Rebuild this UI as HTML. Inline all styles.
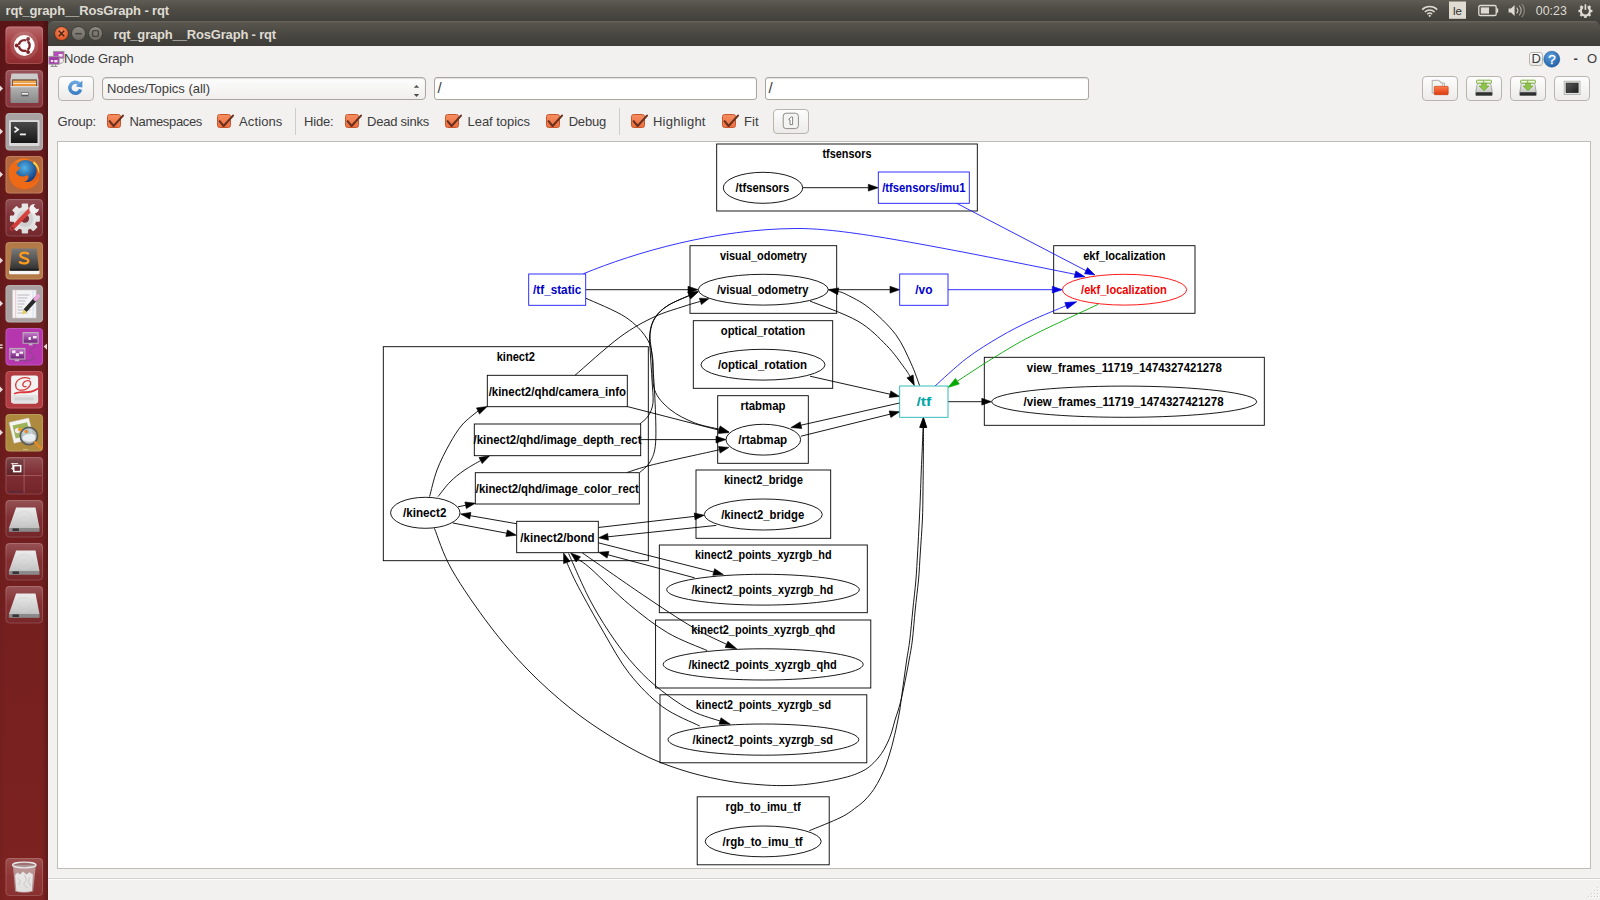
<!DOCTYPE html>
<html>
<head>
<meta charset="utf-8">
<title>rqt_graph__RosGraph - rqt</title>
<style>
html,body{margin:0;padding:0;}
body{width:1600px;height:900px;overflow:hidden;position:relative;background:#f2f1f0;font-family:"Liberation Sans",sans-serif;color:#3c3c3c;}
.abs{position:absolute;}
#panel{left:0;top:0;width:1600px;height:22px;background:linear-gradient(#5e5c54 0,#504e47 35%,#403f3a 100%);}
#panel .ttl{left:5.5px;top:3px;font-size:13px;font-weight:bold;color:#dfdbd2;white-space:nowrap;}
#launcher{left:0;top:21px;width:48px;height:879px;background:linear-gradient(#5c1517 0,#66191b 12%,#701d1e 50%,#7d2321 100%);}
#titlebar{left:48px;top:21px;width:1552px;height:25px;background:linear-gradient(#6a685f 0,#57554d 2px,#4a4842 50%,#3d3c38 100%);border-radius:6px 6px 0 0;}
#titlebar .ttl{left:65.5px;top:6px;font-size:13px;font-weight:bold;color:#dfdbd2;white-space:nowrap;}
.tile{position:absolute;left:6px;width:37px;height:37px;border-radius:4px;box-shadow:inset 0 0 0 1px rgba(255,255,255,0.22);overflow:hidden;}
.tile svg{position:absolute;left:0;top:0;}
.lbl{position:absolute;font-size:13px;color:#3c3c3c;white-space:nowrap;}
.cb{position:absolute;width:14px;height:13.5px;box-sizing:border-box;border:1px solid #c6562b;border-radius:2.5px;background:linear-gradient(#f58d5f,#ee6f40);}
.cb svg{position:absolute;left:-1px;top:-1.3px;overflow:visible;}
.btn{position:absolute;border:1px solid #b9b5ae;border-radius:4px;background:linear-gradient(#fdfdfd,#ecebe9);box-sizing:border-box;}
.inp{position:absolute;border:1px solid #aaa59d;border-radius:3px;background:#fff;box-sizing:border-box;box-shadow:inset 0 1px 1px rgba(0,0,0,0.12);}
</style>
</head>
<body>
<!-- main window content background -->
<div class="abs" style="left:48px;top:46px;width:1552px;height:854px;background:#f2f1f0;"></div>

<!-- dark backing behind titlebar corners -->
<div class="abs" style="left:48px;top:20px;width:1552px;height:10px;background:#3f3e39;"></div>
<!-- top panel -->
<div id="panel" class="abs">
  <div class="lbl ttl" style="letter-spacing:-0.134px;">rqt_graph__RosGraph - rqt</div>
</div>

<!-- indicators -->
<svg class="abs" style="left:1416px;top:0;" width="184" height="22" viewBox="0 0 184 22">
  <!-- wifi -->
  <g fill="none" stroke="#dfdbd2" stroke-linecap="butt">
    <path d="M6.2 9.6 A10.6 10.6 0 0 1 21.2 9.6" stroke-width="1.5"/>
    <path d="M8.8 12 A7 7 0 0 1 18.6 12" stroke-width="1.5"/>
    <path d="M11.2 14.2 A3.6 3.6 0 0 1 16.2 14.2" stroke-width="1.4"/>
  </g>
  <circle cx="13.7" cy="15.8" r="1.1" fill="#dfdbd2"/>
  <!-- le -->
  <rect x="33" y="1.5" width="17" height="17.3" fill="#dfdbd2"/>
  <text x="41.4" y="14.6" font-family="Liberation Sans, sans-serif" font-size="11.5" fill="#2c2b28" text-anchor="middle">le</text>
  <!-- battery -->
  <rect x="62.8" y="5.5" width="17.4" height="10" rx="1.6" fill="none" stroke="#dfdbd2" stroke-width="1.3"/>
  <rect x="80.6" y="8.4" width="1.6" height="4.2" fill="#dfdbd2"/>
  <rect x="64.8" y="7.4" width="8.2" height="6.2" fill="#dfdbd2"/>
  <!-- volume -->
  <path d="M92.6 8.6 H95 L98.6 5 V16 L95 12.4 H92.6 Z" fill="#dfdbd2"/>
  <path d="M100.6 7.6 A4.4 4.4 0 0 1 100.6 13.4" fill="none" stroke="#c9c5bc" stroke-width="1.2"/>
  <path d="M103.2 5.6 A7.2 7.2 0 0 1 103.2 15.4" fill="none" stroke="#aaa79f" stroke-width="1.2"/>
  <path d="M105.8 3.8 A10 10 0 0 1 105.8 17.2" fill="none" stroke="#8a877f" stroke-width="1.2"/>
  <!-- time -->
  <text x="119.8" y="15.2" font-family="Liberation Sans, sans-serif" font-size="13" fill="#dfdbd2" textLength="31" lengthAdjust="spacingAndGlyphs">00:23</text>
  <!-- gear/power -->
  <g transform="translate(169.4,11)">
    <circle r="4.6" fill="none" stroke="#dfdbd2" stroke-width="2.2"/>
    <g stroke="#dfdbd2" stroke-width="2.4">
      <path d="M0 -7 V-4.6" transform="rotate(45)"/><path d="M0 -7 V-4.6" transform="rotate(90)"/><path d="M0 -7 V-4.6" transform="rotate(135)"/>
      <path d="M0 -7 V-4.6" transform="rotate(180)"/><path d="M0 -7 V-4.6" transform="rotate(225)"/><path d="M0 -7 V-4.6" transform="rotate(270)"/><path d="M0 -7 V-4.6" transform="rotate(315)"/>
    </g>
    <rect x="-2.2" y="-7.4" width="4.4" height="5" fill="#4c4a43"/>
    <path d="M0 -6.8 V-1.2" stroke="#dfdbd2" stroke-width="1.7"/>
  </g>
</svg>

<!-- window title bar -->
<div id="titlebar" class="abs">
  <div class="lbl ttl" style="letter-spacing:-0.174px;">rqt_graph__RosGraph - rqt</div>
</div>


<!-- window buttons -->
<svg class="abs" style="left:48px;top:21px;" width="70" height="25" viewBox="0 0 70 25">
  <defs>
    <radialGradient id="gclose" cx="50%" cy="35%" r="70%"><stop offset="0" stop-color="#f58a5c"/><stop offset="1" stop-color="#dc4d1c"/></radialGradient>
    <linearGradient id="ggrey" x1="0" y1="0" x2="0" y2="1"><stop offset="0" stop-color="#8c8a81"/><stop offset="1" stop-color="#6b6961"/></linearGradient>
  </defs>
  <circle cx="13.5" cy="12.5" r="7" fill="url(#gclose)" stroke="#3a2d26" stroke-width="0.8"/>
  <path d="M10.8 9.8 L16.2 15.2 M16.2 9.8 L10.8 15.2" stroke="#4a2313" stroke-width="1.4" fill="none"/>
  <circle cx="30.5" cy="12.5" r="7" fill="url(#ggrey)" stroke="#33322e" stroke-width="0.8"/>
  <path d="M27.3 12.7 H33.7" stroke="#46443f" stroke-width="1.5"/>
  <circle cx="47.5" cy="12.5" r="7" fill="url(#ggrey)" stroke="#33322e" stroke-width="0.8"/>
  <rect x="44.6" y="9.6" width="5.8" height="5.8" rx="1" fill="none" stroke="#46443f" stroke-width="1.4"/>
</svg>

<!-- dock title row -->
<svg class="abs" style="left:48px;top:50px;" width="17" height="18" viewBox="0 0 17 18">
  <rect x="5.4" y="1.4" width="10.6" height="6.8" fill="#b44bb8" stroke="#9a9a9a" stroke-width="0.9"/>
  <rect x="10.6" y="4" width="4" height="2.6" fill="#f1e4f2"/>
  <path d="M14.6 8.4 C16.4 10.4 15.6 13.6 11.6 13.4" fill="none" stroke="#a0a0a0" stroke-width="1"/>
  <rect x="0.8" y="6.4" width="10.4" height="7.8" fill="#a23aa8" stroke="#9a9a9a" stroke-width="0.9"/>
  <rect x="2.8" y="10" width="2.4" height="2" fill="#f1e4f2"/><rect x="6.2" y="10" width="3.4" height="2.4" fill="#f1e4f2"/>
  <path d="M4.4 14.4 V16 M7.6 14.4 V16 M2.6 16.4 H9.4" stroke="#8a8a8a" stroke-width="1"/>
</svg>
<div class="lbl" style="left:64px;top:51px;letter-spacing:-0.133px;">Node Graph</div>

<!-- toolbar row -->
<div class="btn" style="left:58px;top:76px;width:36px;height:25px;"></div>
<svg class="abs" style="left:66px;top:78px;" width="20" height="20" viewBox="0 0 20 20">
  <defs><linearGradient id="gref" x1="0" y1="0" x2="0" y2="1"><stop offset="0" stop-color="#6aa6e0"/><stop offset="1" stop-color="#3f7fc6"/></linearGradient></defs>
  <path d="M13 5.6 A5.5 5.5 0 1 0 14.6 11.4" fill="none" stroke="url(#gref)" stroke-width="3.5"/>
  <path d="M16.4 2.4 L16.4 9.4 L9.8 8.4 Z" fill="#5595d6"/>
</svg>
<div class="inp" style="left:102px;top:77px;width:324px;height:23px;background:linear-gradient(#fdfdfd,#f0efed);border-radius:4px;"></div>
<svg class="abs" style="left:412px;top:83px;" width="10" height="16" viewBox="0 0 10 16"><path d="M1.8 4.8 L4.5 2 L7.2 4.8 Z M1.8 11 L7.2 11 L4.5 14 Z" fill="#4d4d4d"/></svg>
<div class="lbl" style="left:107px;top:81px;letter-spacing:-0.018px;">Nodes/Topics (all)</div>
<div class="inp" style="left:434px;top:77px;width:323px;height:23px;"></div>
<div class="lbl" style="left:437.5px;top:79px;font-size:15px;">/</div>
<div class="inp" style="left:765px;top:77px;width:324px;height:23px;"></div>
<div class="lbl" style="left:768.5px;top:79px;font-size:15px;">/</div>
<div class="btn" style="left:1422px;top:76px;width:36px;height:25px;"></div>
<div class="btn" style="left:1466px;top:76px;width:36px;height:25px;"></div>
<div class="btn" style="left:1510px;top:76px;width:36px;height:25px;"></div>
<div class="btn" style="left:1554px;top:76px;width:36px;height:25px;"></div>


<!-- toolbar icons right -->
<svg class="abs" style="left:1430px;top:78px;" width="20" height="19" viewBox="0 0 20 19">
  <defs><linearGradient id="gfold" x1="0" y1="0" x2="0" y2="1"><stop offset="0" stop-color="#fb7d4c"/><stop offset="1" stop-color="#dd3a0e"/></linearGradient></defs>
  <path d="M2.2 2.4 H8.4 L11.2 5 H14.4 V15 H2.2 Z" fill="#f4f4f2" stroke="#a9a7a2" stroke-width="0.9"/>
  <path d="M6 2.4 H9.6 L12.4 5.2 V8" fill="none" stroke="#bcbab5" stroke-width="0.8"/>
  <rect x="4.2" y="8.3" width="14" height="8.4" rx="0.8" fill="url(#gfold)" stroke="#c5370f" stroke-width="0.6"/>
</svg>
<svg id="drv1" class="abs" style="left:1474px;top:78px;" width="20" height="20" viewBox="0 0 20 20">
  <defs><linearGradient id="gdrv" x1="0" y1="0" x2="0" y2="1"><stop offset="0" stop-color="#f2f2f0"/><stop offset="1" stop-color="#b9b9b6"/></linearGradient></defs>
  <path d="M3.4 5 H16.6 L18.2 14 V17.4 H1.8 V14 Z" fill="url(#gdrv)" stroke="#8b8b88" stroke-width="0.7"/>
  <rect x="1.8" y="14.2" width="16.4" height="3.4" rx="0.8" fill="#2f2f2f"/>
  <rect x="2.6" y="2.2" width="14.8" height="3" rx="0.8" fill="#eef5e2" stroke="#7cb13c" stroke-width="1"/>
  <path d="M9.6 2.4 V5" stroke="#7cb13c" stroke-width="0.8"/>
  <path d="M7.6 5.2 H12.4 V8 H15 L10 12.8 L5 8 H7.6 Z" fill="#8dc348" stroke="#6da030" stroke-width="0.6"/>
</svg>
<svg id="drv2" class="abs" style="left:1518px;top:78px;" width="20" height="20" viewBox="0 0 20 20">
  <path d="M3.4 5 H16.6 L18.2 14 V17.4 H1.8 V14 Z" fill="url(#gdrv)" stroke="#8b8b88" stroke-width="0.7"/>
  <rect x="1.8" y="14.2" width="16.4" height="3.4" rx="0.8" fill="#2f2f2f"/>
  <rect x="2.6" y="2.2" width="14.8" height="3" rx="0.8" fill="#eef5e2" stroke="#7cb13c" stroke-width="1"/>
  <path d="M9.6 2.4 V5" stroke="#7cb13c" stroke-width="0.8"/>
  <path d="M7.6 5.2 H12.4 V8 H15 L10 12.8 L5 8 H7.6 Z" fill="#8dc348" stroke="#6da030" stroke-width="0.6"/>
</svg>
<svg class="abs" style="left:1562px;top:79px;" width="20" height="18" viewBox="0 0 20 18">
  <defs><linearGradient id="gblk" x1="0" y1="0" x2="1" y2="1"><stop offset="0" stop-color="#5a5a5a"/><stop offset="1" stop-color="#1e1e1e"/></linearGradient></defs>
  <rect x="2.2" y="2.2" width="15.8" height="13.4" fill="#f6f6f5" stroke="#a5a5a2" stroke-width="0.8"/>
  <rect x="4" y="4" width="12.2" height="9.8" fill="url(#gblk)" stroke="#222" stroke-width="0.6"/>
</svg>

<!-- D / ? / - O -->
<div class="abs" style="left:1529px;top:52px;width:14px;height:13.5px;box-sizing:border-box;border:1px solid #b9b5ae;border-radius:3px;background:linear-gradient(#fdfdfd,#e9e8e6);"></div>
<div class="lbl" style="left:1531.5px;top:51px;font-size:13px;">D</div>
<svg class="abs" style="left:1543px;top:50px;" width="18" height="18" viewBox="0 0 18 18">
  <defs><radialGradient id="ghelp" cx="40%" cy="30%" r="75%"><stop offset="0" stop-color="#5a9bdc"/><stop offset="1" stop-color="#1f5fa6"/></radialGradient></defs>
  <circle cx="8.8" cy="9.2" r="8" fill="url(#ghelp)" stroke="#1c568f" stroke-width="0.5"/>
  <text x="8.9" y="13.8" font-family="Liberation Sans, sans-serif" font-size="13.5" fill="#fff" stroke="#fff" stroke-width="0.35" text-anchor="middle">?</text>
</svg>
<div class="lbl" style="left:1573.5px;top:50.5px;font-weight:bold;">-</div>
<div class="lbl" style="left:1587px;top:51px;">O</div>

<!-- options row -->
<div class="lbl" style="left:57.5px;top:114px;letter-spacing:-0.208px;">Group:</div>
<div class="cb" style="left:107px;top:114px;"><svg width="18" height="16" viewBox="0 0 18 16"><path d="M2.6 7.2 L6.6 12 L16 1.6" fill="none" stroke="#6a3120" stroke-width="2.1" stroke-linecap="round" stroke-linejoin="round"/></svg></div><div class="lbl" style="left:129.5px;top:114px;letter-spacing:-0.338px;">Namespaces</div>
<div class="cb" style="left:217px;top:114px;"><svg width="18" height="16" viewBox="0 0 18 16"><path d="M2.6 7.2 L6.6 12 L16 1.6" fill="none" stroke="#6a3120" stroke-width="2.1" stroke-linecap="round" stroke-linejoin="round"/></svg></div><div class="lbl" style="left:239px;top:114px;letter-spacing:0.123px;">Actions</div>
<div class="abs" style="left:295px;top:108px;width:1px;height:27px;background:#d0cdc8;"></div>
<div class="lbl" style="left:304px;top:114px;letter-spacing:-0.172px;">Hide:</div>
<div class="cb" style="left:345px;top:114px;"><svg width="18" height="16" viewBox="0 0 18 16"><path d="M2.6 7.2 L6.6 12 L16 1.6" fill="none" stroke="#6a3120" stroke-width="2.1" stroke-linecap="round" stroke-linejoin="round"/></svg></div><div class="lbl" style="left:367px;top:114px;letter-spacing:-0.231px;">Dead sinks</div>
<div class="cb" style="left:445px;top:114px;"><svg width="18" height="16" viewBox="0 0 18 16"><path d="M2.6 7.2 L6.6 12 L16 1.6" fill="none" stroke="#6a3120" stroke-width="2.1" stroke-linecap="round" stroke-linejoin="round"/></svg></div><div class="lbl" style="left:467.5px;top:114px;letter-spacing:-0.034px;">Leaf topics</div>
<div class="cb" style="left:546px;top:114px;"><svg width="18" height="16" viewBox="0 0 18 16"><path d="M2.6 7.2 L6.6 12 L16 1.6" fill="none" stroke="#6a3120" stroke-width="2.1" stroke-linecap="round" stroke-linejoin="round"/></svg></div><div class="lbl" style="left:568.7px;top:114px;letter-spacing:-0.203px;">Debug</div>
<div class="abs" style="left:619px;top:108px;width:1px;height:27px;background:#d0cdc8;"></div>
<div class="cb" style="left:631px;top:114px;"><svg width="18" height="16" viewBox="0 0 18 16"><path d="M2.6 7.2 L6.6 12 L16 1.6" fill="none" stroke="#6a3120" stroke-width="2.1" stroke-linecap="round" stroke-linejoin="round"/></svg></div><div class="lbl" style="left:653px;top:114px;letter-spacing:0.234px;">Highlight</div>
<div class="cb" style="left:722px;top:114px;"><svg width="18" height="16" viewBox="0 0 18 16"><path d="M2.6 7.2 L6.6 12 L16 1.6" fill="none" stroke="#6a3120" stroke-width="2.1" stroke-linecap="round" stroke-linejoin="round"/></svg></div><div class="lbl" style="left:744px;top:114px;letter-spacing:0.082px;">Fit</div>
<div class="btn" style="left:773px;top:109px;width:36px;height:25px;"></div>
<svg class="abs" style="left:782px;top:112px;" width="18" height="18" viewBox="0 0 18 18">
  <rect x="1.2" y="1.2" width="15.2" height="15.4" rx="3" fill="#f4f4f3" stroke="#8f8d88" stroke-width="1"/>
  <path d="M7 6.8 L9.4 5 H10.6 V12.6 H8 V8 H7 Z" fill="#fff" stroke="#77756f" stroke-width="0.9"/>
</svg>

<!-- launcher -->
<div id="launcher" class="abs">
  <div class="abs" style="left:0;top:0;width:48px;height:879px;background:linear-gradient(90deg,rgba(0,0,0,0.05) 0,rgba(0,0,0,0) 12%,rgba(0,0,0,0) 88%,rgba(0,0,0,0.12) 94%,rgba(0,0,0,0.24) 100%);"></div>
</div>
<svg class="abs" style="left:0;top:21px;" width="48" height="879" viewBox="0 21 48 879">
  <defs>
    <linearGradient id="tg" x1="0" y1="0" x2="0" y2="1"><stop offset="0" stop-color="#fff" stop-opacity="0.28"/><stop offset="0.5" stop-color="#fff" stop-opacity="0.04"/><stop offset="1" stop-color="#000" stop-opacity="0.1"/></linearGradient>
    <linearGradient id="gcab" x1="0" y1="0" x2="0" y2="1"><stop offset="0" stop-color="#c2c2c2"/><stop offset="1" stop-color="#8a8a8a"/></linearGradient>
    <linearGradient id="gterm" x1="0" y1="0" x2="0" y2="1"><stop offset="0" stop-color="#4a4a4a"/><stop offset="1" stop-color="#161616"/></linearGradient>
    <radialGradient id="gff" cx="45%" cy="40%" r="60%"><stop offset="0" stop-color="#ffb63a"/><stop offset="0.6" stop-color="#f57a1c"/><stop offset="1" stop-color="#d9480f"/></radialGradient>
    <radialGradient id="gglobe" cx="45%" cy="35%" r="65%"><stop offset="0" stop-color="#4fb4e8"/><stop offset="1" stop-color="#14397c"/></radialGradient>
    <linearGradient id="gsub" x1="0" y1="0" x2="0" y2="1"><stop offset="0" stop-color="#7a7a7a"/><stop offset="1" stop-color="#2e2e2e"/></linearGradient>
    <linearGradient id="ghd" x1="0" y1="0" x2="0" y2="1"><stop offset="0" stop-color="#e9e9e9"/><stop offset="1" stop-color="#c4c4c4"/></linearGradient>
    <linearGradient id="gmon" x1="0" y1="0" x2="0" y2="1"><stop offset="0" stop-color="#c77acb"/><stop offset="1" stop-color="#6d1d78"/></linearGradient>
    <g id="hdd">
      <path d="M10.6 3.6 H30 L34 24 H3.4 Z" fill="url(#ghd)"/>
      <ellipse cx="18.6" cy="14.6" rx="8.6" ry="7" fill="none" stroke="#d2d2d2" stroke-width="0.9"/>
      <ellipse cx="19" cy="14" rx="3" ry="2" fill="none" stroke="#d8d8d8" stroke-width="0.9"/>
      <rect x="3.4" y="24" width="30.6" height="3.8" fill="#8c8c8c"/>
      <rect x="7" y="24.4" width="6.4" height="2.6" fill="#333"/>
    </g>
  </defs>
  <!-- tile backgrounds -->
  <g id="tiles">
    <rect x="5.5" y="26.5" width="37.5" height="37.5" rx="4" fill="#9d2f33"/>
    <rect x="5.5" y="70" width="37.5" height="37.5" rx="4" fill="#8b3840"/>
    <rect x="5.5" y="113" width="37.5" height="37.5" rx="4" fill="#a9a2a2"/>
    <rect x="5.5" y="156" width="37.5" height="37.5" rx="4" fill="#b2673f"/>
    <rect x="5.5" y="199" width="37.5" height="37.5" rx="4" fill="#7a2a30"/>
    <rect x="5.5" y="242" width="37.5" height="37.5" rx="4" fill="#b37a48"/>
    <rect x="5.5" y="285" width="37.5" height="37.5" rx="4" fill="#aaa2a0"/>
    <rect x="5.5" y="328" width="37.5" height="37.5" rx="4" fill="#b536ad"/>
    <rect x="5.5" y="371" width="37.5" height="37.5" rx="4" fill="#b13c42"/>
    <rect x="5.5" y="414" width="37.5" height="37.5" rx="4" fill="#ad8a3e"/>
    <rect x="5.5" y="457" width="37.5" height="37.5" rx="4" fill="#78252a"/>
    <rect x="5.5" y="500" width="37.5" height="37.5" rx="4" fill="#7b272b"/>
    <rect x="5.5" y="543" width="37.5" height="37.5" rx="4" fill="#7d282b"/>
    <rect x="5.5" y="586" width="37.5" height="37.5" rx="4" fill="#7f292b"/>
    <rect x="5.5" y="858" width="37.5" height="38" rx="4" fill="#8c3231"/>
  </g>
  <!-- 1 ubuntu -->
  <g transform="translate(5.5,26.5)">
    <circle cx="18.8" cy="19" r="14" fill="#fff" fill-opacity="0.12"/>
    <circle cx="18.8" cy="19" r="10.4" fill="#fff"/>
    <circle cx="18.8" cy="19" r="5.4" fill="none" stroke="#7a1a1e" stroke-width="2.3"/>
    <g fill="#7a1a1e"><circle cx="11.2" cy="19" r="1.9"/><circle cx="22.6" cy="12.4" r="1.9"/><circle cx="22.6" cy="25.6" r="1.9"/></g>
    <g stroke="#fff" stroke-width="1.3"><path d="M13 19 H15"/><path d="M21.6 14.2 L20.6 15.9"/><path d="M21.6 23.8 L20.6 22.1"/></g>
  </g>
  <!-- 2 files -->
  <g transform="translate(5.5,70)">
    <path d="M6 3.5 H32 L33 10 H5 Z" fill="#c6c6c6"/>
    <rect x="5" y="9" width="28" height="24" rx="1.2" fill="url(#gcab)"/>
    <rect x="6.6" y="9.4" width="24.8" height="6.8" fill="#5a3a22"/>
    <rect x="7.4" y="10.6" width="23.2" height="2.2" fill="#f7a340"/>
    <rect x="7.4" y="12.8" width="23.2" height="1.2" fill="#fde2b8"/>
    <rect x="7.4" y="14" width="23.2" height="2.2" fill="#ee8a2c"/>
    <rect x="5" y="16.2" width="28" height="1" fill="#e6e6e6"/>
    <rect x="15.4" y="22" width="8" height="4.8" rx="0.8" fill="#7d7d7d"/>
    <rect x="16.4" y="23" width="6" height="1.8" fill="#ededed"/>
    <rect x="16.4" y="24.8" width="6" height="1.2" fill="#555"/>
  </g>
  <!-- 3 terminal -->
  <g transform="translate(5.5,113)">
    <rect x="3.5" y="7" width="30.5" height="26" rx="1.2" fill="#d9d9d9"/>
    <rect x="5.4" y="9" width="26.6" height="21" fill="url(#gterm)"/>
    <path d="M9 14 L12.6 16.6 L9 19.2" fill="none" stroke="#f0f0f0" stroke-width="1.7"/>
    <path d="M14.4 21.4 H20.4" stroke="#f0f0f0" stroke-width="1.8"/>
  </g>
  <!-- 4 firefox -->
  <g transform="translate(5.5,156) translate(18.6,18.4) scale(1.1) translate(-19,-19.6)">
    <circle cx="19" cy="19" r="14" fill="url(#gff)"/>
    <circle cx="20.4" cy="16.6" r="10" fill="url(#gglobe)"/>
    <path d="M5.4 14 C7 9.6 10.4 7.6 13.8 8.4 C11.6 10.6 12.6 13 15.6 13.4 C14.8 15.6 12.2 16 11.8 18.4 C13.4 21.6 18.6 22.6 22 20.2 C24.6 22 22 26.4 18 26.6 C23 30 31 27 32.6 19 C34 26 29 33 19 33 C10 33 4 26 5.4 14 Z" fill="#ee6a17"/>
    <path d="M28 7.6 C32 10.6 33.6 15.4 32.6 19.6 C31.8 15 30.4 12.2 27.2 9.8 Z" fill="#ffd23e"/>
  </g>
  <!-- 5 settings -->
  <g transform="translate(5.5,199)">
    <g transform="translate(19.4,19.6)">
      <g fill="#e4e4e4">
        <rect x="-3.2" y="-15" width="6.4" height="30" rx="1"/>
        <rect x="-3.2" y="-15" width="6.4" height="30" rx="1" transform="rotate(45)"/>
        <rect x="-3.2" y="-15" width="6.4" height="30" rx="1" transform="rotate(90)"/>
        <rect x="-3.2" y="-15" width="6.4" height="30" rx="1" transform="rotate(135)"/>
      </g>
      <circle r="11.6" fill="#e4e4e4"/>
      <circle r="8.4" fill="#cfcfcf"/>
      <circle r="4.2" fill="#7a2a30"/>
    </g>
    <path d="M6.4 29.6 L24.6 10.8" stroke="#d53a35" stroke-width="4.2" stroke-linecap="round"/>
    <circle cx="6.8" cy="29.4" r="1.3" fill="#7a2a30"/>
    <path d="M24.4 12.4 C22.6 8.4 25.4 4.6 29.4 5 L27.8 8 L30.6 10.6 L33.4 9.4 C33.4 13.4 29.4 15.2 26 13.8 Z" fill="#f1f1f1"/>
  </g>
  <!-- 6 sublime -->
  <g transform="translate(5.5,242)">
    <path d="M4.4 28.4 L6.4 6.4 H31.2 L33.4 28.4 Z" fill="url(#gsub)"/>
    <path d="M3.6 28.4 H34 V31 Q34 32.2 32.8 32.2 H4.8 Q3.6 32.2 3.6 31 Z" fill="#f4f4f4"/>
    <rect x="4.6" y="26.8" width="28.6" height="2" fill="#1e1e1e"/>
    <path d="M22.6 11.6 C19 9.6 14.6 11 15 13.6 C15.4 16.6 22.6 15.6 22.8 18.8 C23 21.6 17.6 22.2 14.4 20.2" fill="none" stroke="#ff9a1c" stroke-width="2.3" stroke-linecap="round"/>
  </g>
  <!-- 7 text editor -->
  <g transform="translate(5.5,285)">
    <rect x="7" y="5" width="23.6" height="28" fill="#f4f4f6" stroke="#c9c9c9" stroke-width="0.6"/>
    <path d="M10.2 5 V33" stroke="#f0b0b0" stroke-width="0.7"/>
    <path d="M27.6 5 V33" stroke="#c8d4f0" stroke-width="0.7"/>
    <g stroke="#b9b9c0" stroke-width="1"><path d="M12 10 H24"/><path d="M12 13 H22"/><path d="M12 16 H20"/><path d="M12 19 H19"/><path d="M12 22 H17"/><path d="M12 25 H25"/><path d="M12 28 H22"/></g>
    <path d="M19.6 25.6 L30.6 13.4" stroke="#2a2a2a" stroke-width="4"/>
    <path d="M30 14 L32.4 11.2" stroke="#e9a3d8" stroke-width="4.2" stroke-linecap="round"/>
    <path d="M16.4 29.4 L18 24.6 L21.4 27.4 Z" fill="#e6cf4e"/>
  </g>
  <!-- 8 rqt (active) -->
  <g transform="translate(5.5,328)">
    <rect x="17.6" y="4.6" width="15" height="10.6" fill="url(#gmon)" stroke="#b9b9b9" stroke-width="1"/>
    <rect x="27.4" y="8" width="3.8" height="2.4" fill="#f5ecf6"/><rect x="23" y="9" width="2.4" height="3" fill="#f5ecf6"/>
    <rect x="23.4" y="15.6" width="3.6" height="1.8" fill="#b9b9b9"/>
    <rect x="4.4" y="20.4" width="15" height="10.6" fill="url(#gmon)" stroke="#b9b9b9" stroke-width="1"/>
    <rect x="6.6" y="22.4" width="3.4" height="2.8" fill="#f5ecf6"/><rect x="10.4" y="25.2" width="3" height="3" fill="#f5ecf6"/><rect x="14" y="23.6" width="3.6" height="2.2" fill="#f5ecf6"/>
    <rect x="9.4" y="31.4" width="4.4" height="1.8" fill="#b9b9b9"/>
    <path d="M29.4 17 C30.4 21 23 20.6 24.6 24.2 C26 26.6 29.6 26.4 28.4 30.4 C27.6 32.6 22 32.4 14 32.4" fill="none" stroke="#7b4a80" stroke-width="0.9"/>
  </g>
  <!-- 9 red doc -->
  <g transform="translate(5.5,371)">
    <rect x="5.6" y="4.4" width="27" height="28" rx="2.4" fill="#f2f2f2"/>
    <rect x="5.6" y="24" width="27" height="8.4" rx="2.4" fill="#e3e3e3"/>
    <rect x="9" y="26.4" width="19" height="3" fill="#d2d2d2"/>
    <path d="M24.8 8 C18 4.4 9.6 8.6 10.2 15 C10.8 21 20.8 20.4 24.4 14.6 C26.4 11 24 8.6 20.4 10 C16 11.8 16.4 17 21 15.4" fill="none" stroke="#d93a3c" stroke-width="1.3"/>
    <path d="M8.4 22 C16 18 24 22.6 32.6 16.4 L32.6 18.4 C24 24.4 16 20.4 8.4 23.4 Z" fill="#d93a3c"/>
  </g>
  <!-- 10 image viewer -->
  <g transform="translate(5.5,414)">
    <path d="M3.6 8.4 L23.2 4 L28.4 24.4 L8.6 29.2 Z" fill="#f4f4f2" stroke="#cfcfcf" stroke-width="0.5"/>
    <path d="M7 11.6 L21.6 8.2 L24.8 20.8 L10.2 24.4 Z" fill="#9db45c"/>
    <circle cx="12" cy="16.6" r="2.6" fill="#f0e6f4"/><circle cx="17.6" cy="17.6" r="2.8" fill="#f0e6f4"/><circle cx="14.6" cy="15.4" r="2" fill="#f09a1a"/>
    <circle cx="23.4" cy="22" r="8.6" fill="#b6c6d6" fill-opacity="0.78" stroke="#5a5a5a" stroke-width="1.7"/>
    <path d="M17.4 22.6 C19 19.6 27 18.6 30 21.6 L29.6 26 C26 28.4 20 28.4 17.6 25.6 Z" fill="#eef2f6" fill-opacity="0.9"/>
    <circle cx="20.6" cy="17.6" r="1.7" fill="#f0861a"/>
    <path d="M29.6 28.4 L35 34" stroke="#e08a2a" stroke-width="2.6" stroke-linecap="round"/>
    <path d="M17.6 35.4 H22.8" stroke="#d9c9a0" stroke-width="0.8"/>
  </g>
  <!-- 11 workspace switcher -->
  <g transform="translate(5.5,457)">
    <rect x="1.4" y="2.4" width="16.6" height="15.6" fill="#000" fill-opacity="0.26"/>
    <path d="M18.6 2 V35.6 M1.4 18.6 H36" stroke="#c98a8a" stroke-opacity="0.55" stroke-width="0.9"/>
    <path d="M5.6 6.6 H12.6 M7.2 6.6 V13 M5.6 11.4 H7.4" fill="none" stroke="#e9dede" stroke-width="1"/>
    <rect x="8.2" y="8.6" width="7" height="6" fill="#5a1a22" stroke="#fff" stroke-width="1.5"/>
    <path d="M3.4 34.8 H17.6" stroke="#4a2a4a" stroke-width="0.9"/>
  </g>
  <!-- 12-14 drives -->
  <use href="#hdd" x="5.5" y="504"/>
  <use href="#hdd" x="5.5" y="547"/>
  <use href="#hdd" x="5.5" y="590"/>
  <!-- trash -->
  <g transform="translate(5.5,858)">
    <path d="M7.4 7 L9.6 33.6 Q18.6 36 27.6 33.6 L30.4 7 Z" fill="#d8d8d8" fill-opacity="0.55"/>
    <path d="M9.6 17 L12 14.6 L14.4 16.6 L17.6 13.6 L21 16.4 L24 14.2 L27.4 16.6 L26.4 33 Q18.6 35 10.8 33 Z" fill="#ececec" fill-opacity="0.92"/>
    <path d="M12 20 L15 23 L13 27 M19 17 L21 22 L18 26 L22 30 M24 19 L23 24 L25.4 28" fill="none" stroke="#c9c4c4" stroke-width="0.9"/>
    <ellipse cx="18.8" cy="7" rx="11.8" ry="2.8" fill="#9a8a8a" fill-opacity="0.55" stroke="#e6e6e6" stroke-width="1.3"/>
  </g>
  <!-- gloss over tiles -->
  <g>
    <rect x="5.5" y="26.5" width="37.5" height="37.5" rx="4" fill="url(#tg)"/>
    <rect x="5.5" y="70" width="37.5" height="37.5" rx="4" fill="url(#tg)" fill-opacity="0.5"/>
    <rect x="5.5" y="199" width="37.5" height="37.5" rx="4" fill="url(#tg)" fill-opacity="0.6"/>
    <rect x="5.5" y="457" width="37.5" height="37.5" rx="4" fill="url(#tg)" fill-opacity="0.7"/>
    <rect x="5.5" y="500" width="37.5" height="37.5" rx="4" fill="url(#tg)" fill-opacity="0.7"/>
    <rect x="5.5" y="543" width="37.5" height="37.5" rx="4" fill="url(#tg)" fill-opacity="0.7"/>
    <rect x="5.5" y="586" width="37.5" height="37.5" rx="4" fill="url(#tg)" fill-opacity="0.7"/>
    <rect x="5.5" y="858" width="37.5" height="38" rx="4" fill="url(#tg)" fill-opacity="0.45"/>
  </g>
  <g fill="none" stroke="#fff" stroke-opacity="0.2" stroke-width="0.8">
    <rect x="6" y="27" width="36.5" height="36.5" rx="3.6"/><rect x="6" y="70.5" width="36.5" height="36.5" rx="3.6"/><rect x="6" y="113.5" width="36.5" height="36.5" rx="3.6"/>
    <rect x="6" y="156.5" width="36.5" height="36.5" rx="3.6"/><rect x="6" y="199.5" width="36.5" height="36.5" rx="3.6"/><rect x="6" y="242.5" width="36.5" height="36.5" rx="3.6"/>
    <rect x="6" y="285.5" width="36.5" height="36.5" rx="3.6"/><rect x="6" y="328.5" width="36.5" height="36.5" rx="3.6"/><rect x="6" y="371.5" width="36.5" height="36.5" rx="3.6"/>
    <rect x="6" y="414.5" width="36.5" height="36.5" rx="3.6"/><rect x="6" y="457.5" width="36.5" height="36.5" rx="3.6"/><rect x="6" y="500.5" width="36.5" height="36.5" rx="3.6"/>
    <rect x="6" y="543.5" width="36.5" height="36.5" rx="3.6"/><rect x="6" y="586.5" width="36.5" height="36.5" rx="3.6"/><rect x="6" y="858.5" width="36.5" height="37" rx="3.6"/>
  </g>
  <!-- running indicators (left arrows) -->
  <g fill="#e8dcdc">
    <path d="M0 85.6 L3 88.6 L0 91.6 Z"/><path d="M0 128.6 L3 131.6 L0 134.6 Z"/><path d="M0 171.6 L3 174.6 L0 177.6 Z"/>
    <path d="M0 257.6 L3 260.6 L0 263.6 Z"/><path d="M0 300.6 L3 303.6 L0 306.6 Z"/>
    <path d="M0 386.6 L3 389.6 L0 392.6 Z"/><path d="M0 429.6 L3 432.6 L0 435.6 Z"/>
    <rect x="0" y="344.4" width="2.6" height="1.4"/><rect x="0" y="347" width="2.6" height="1.4"/>
    <path d="M47 343.4 L43.6 346.6 L47 349.8 Z"/>
  </g>
</svg>
<!-- graph view -->
<div class="abs" style="left:57px;top:141px;width:1534px;height:728px;background:#fff;border:1px solid #bfbcb5;box-sizing:border-box;"></div>
<!-- status line -->
<div class="abs" style="left:48px;top:878px;width:1552px;height:1px;background:#d5d2cd;"></div>
<div class="abs" style="left:48px;top:879px;width:1552px;height:1px;background:#fbfbfa;"></div>
<!-- size grip -->
<svg class="abs" style="left:1586px;top:885px;" width="14" height="14" viewBox="0 0 14 14">
  <g fill="#d2cfca"><rect x="11" y="2" width="1" height="1"/><rect x="8" y="5" width="1" height="1"/><rect x="11" y="5" width="1" height="1"/><rect x="5" y="8" width="1" height="1"/><rect x="8" y="8" width="1" height="1"/><rect x="11" y="8" width="1" height="1"/><rect x="2" y="11" width="1" height="1"/><rect x="5" y="11" width="1" height="1"/><rect x="8" y="11" width="1" height="1"/><rect x="11" y="11" width="1" height="1"/></g>
  <g fill="#fff"><rect x="12" y="3" width="1" height="1"/><rect x="9" y="6" width="1" height="1"/><rect x="12" y="6" width="1" height="1"/><rect x="6" y="9" width="1" height="1"/><rect x="9" y="9" width="1" height="1"/><rect x="12" y="9" width="1" height="1"/><rect x="3" y="12" width="1" height="1"/><rect x="6" y="12" width="1" height="1"/><rect x="9" y="12" width="1" height="1"/><rect x="12" y="12" width="1" height="1"/></g>
</svg>
<svg id="graph" class="abs" style="left:0;top:0;" width="1600" height="900" viewBox="0 0 1600 900" font-family="Liberation Sans, sans-serif" font-weight="bold" font-size="13">
<g fill="none" stroke="#000" stroke-width="0.9">
<rect x="716.7" y="144.0" width="260.6" height="67.0"/>
<rect x="690.0" y="245.7" width="146.7" height="67.6"/>
<rect x="693.3" y="320.7" width="139.4" height="67.6"/>
<rect x="717.7" y="395.7" width="90.6" height="67.6"/>
<rect x="696.0" y="470.0" width="134.7" height="68.3"/>
<rect x="659.3" y="545.0" width="208.0" height="67.7"/>
<rect x="655.6" y="620.0" width="215.2" height="68.0"/>
<rect x="660.0" y="694.8" width="206.8" height="68.0"/>
<rect x="697.2" y="796.8" width="132.0" height="68.0"/>
<rect x="383.3" y="346.7" width="265.0" height="214.0"/>
<rect x="1053.7" y="245.7" width="141.3" height="67.6"/>
<rect x="984.3" y="357.3" width="280.0" height="68.0"/>
</g>
<g fill="#000" text-anchor="middle">
<text x="847.0" y="158.3" textLength="49.0" lengthAdjust="spacingAndGlyphs">tfsensors</text>
<text x="763.4" y="260.0" textLength="87.0" lengthAdjust="spacingAndGlyphs">visual_odometry</text>
<text x="763.0" y="335.0" textLength="84.3" lengthAdjust="spacingAndGlyphs">optical_rotation</text>
<text x="763.0" y="410.0" textLength="45.0" lengthAdjust="spacingAndGlyphs">rtabmap</text>
<text x="763.4" y="484.3" textLength="79.0" lengthAdjust="spacingAndGlyphs">kinect2_bridge</text>
<text x="763.3" y="559.3" textLength="136.7" lengthAdjust="spacingAndGlyphs">kinect2_points_xyzrgb_hd</text>
<text x="763.2" y="634.3" textLength="144.0" lengthAdjust="spacingAndGlyphs">kinect2_points_xyzrgb_qhd</text>
<text x="763.4" y="709.1" textLength="135.2" lengthAdjust="spacingAndGlyphs">kinect2_points_xyzrgb_sd</text>
<text x="763.2" y="811.1" textLength="75.2" lengthAdjust="spacingAndGlyphs">rgb_to_imu_tf</text>
<text x="515.8" y="361.0" textLength="38.3" lengthAdjust="spacingAndGlyphs">kinect2</text>
<text x="1124.3" y="260.0" textLength="82.3" lengthAdjust="spacingAndGlyphs">ekf_localization</text>
<text x="1124.3" y="371.6" textLength="195.0" lengthAdjust="spacingAndGlyphs">view_frames_11719_1474327421278</text>
</g>
<!-- edges -->
<path d="M802.7,187.7L868.3,187.7" fill="none" stroke="#000" stroke-width="0.9"/>
<polygon points="878.3,187.7 868.3,191.1 868.3,184.3" fill="#000" stroke="#000" stroke-width="0.6"/>
<path d="M956.7,203.3L1086.0,270.7" fill="none" stroke="#1a1aff" stroke-width="0.9"/>
<polygon points="1095.0,275.0 1084.5,273.8 1087.5,267.6" fill="#0000dd" stroke="#0000dd" stroke-width="0.6"/>
<path d="M583.3,273.8C636,252 716,229 796,228.5C838,228.3 898,238.5 1075,274.3" fill="none" stroke="#1a1aff" stroke-width="0.9"/>
<polygon points="1085.0,276.8 1074.2,277.6 1075.8,271.0" fill="#0000dd" stroke="#0000dd" stroke-width="0.6"/>
<path d="M585.7,289.7L688.0,289.7" fill="none" stroke="#000" stroke-width="0.9"/>
<polygon points="698.3,289.7 688.0,293.1 688.0,286.3" fill="#000" stroke="#000" stroke-width="0.6"/>
<path d="M586.0,298.3C592.6,301.4 615.5,310.5 625.6,317.2C635.7,323.9 642.2,331.4 646.7,338.3C651.2,345.2 651.4,349.8 652.7,358.3C654.0,366.8 651.5,380.9 654.4,389.4C657.3,397.9 663.3,403.8 670.0,409.4C676.7,415.0 686.2,419.5 694.4,422.8C702.6,426.1 715.1,428.1 719.3,429.2" fill="none" stroke="#000" stroke-width="0.9"/>
<polygon points="728.9,431.9 718.4,432.5 720.2,425.9" fill="#000" stroke="#000" stroke-width="0.6"/>
<path d="M828.3,289.7L890.0,289.7" fill="none" stroke="#000" stroke-width="0.9"/>
<polygon points="899.7,289.7 890.0,293.1 890.0,286.3" fill="#000" stroke="#000" stroke-width="0.6"/>
<path d="M948.0,289.7L1052.3,289.7" fill="none" stroke="#1a1aff" stroke-width="0.9"/>
<polygon points="1062.3,289.7 1052.3,293.1 1052.3,286.3" fill="#0000dd" stroke="#0000dd" stroke-width="0.6"/>
<path d="M935.0,386.0C940.3,381.4 955.9,366.5 966.7,358.3C977.5,350.1 989.5,342.9 1000.0,336.7C1010.5,330.5 1019.0,326.3 1030.0,321.1C1041.0,315.9 1060.0,308.3 1066.0,305.7" fill="none" stroke="#1a1aff" stroke-width="0.9"/>
<polygon points="1076.7,301.7 1067.2,308.9 1064.8,302.5" fill="#0000dd" stroke="#0000dd" stroke-width="0.6"/>
<path d="M1098.3,304.3C1087.5,309.4 1050.8,326.1 1033.3,335.0C1015.8,343.9 1005.9,350.3 993.3,358.0C980.6,365.7 963.4,377.3 957.4,381.2" fill="none" stroke="#00a800" stroke-width="0.9"/>
<polygon points="947.8,387.6 955.5,378.4 959.3,384.0" fill="#00a800" stroke="#00a800" stroke-width="0.6"/>
<path d="M810.0,301.1C818.0,304.4 845.0,313.7 857.8,321.1C870.6,328.5 878.9,337.8 886.7,345.6C894.5,353.4 900.5,362.7 904.4,367.8C908.3,372.9 909.1,375.0 910.0,376.4" fill="none" stroke="#000" stroke-width="0.9"/>
<polygon points="914.4,385.6 906.9,377.9 913.1,374.9" fill="#000" stroke="#000" stroke-width="0.6"/>
<path d="M919.6,385.6C918.2,381.9 915.0,371.8 911.0,363.3C907.0,354.8 902.6,343.6 895.6,334.4C888.6,325.1 877.0,314.4 868.9,307.8C860.8,301.2 851.8,297.4 846.7,294.6C841.6,291.9 839.6,291.9 838.2,291.3" fill="none" stroke="#000" stroke-width="0.9"/>
<polygon points="828.4,289.7 838.7,287.9 837.7,294.7" fill="#000" stroke="#000" stroke-width="0.6"/>
<path d="M810.0,376.2L890.0,394.2" fill="none" stroke="#000" stroke-width="0.9"/>
<polygon points="899.6,396.4 889.2,397.5 890.8,390.9" fill="#000" stroke="#000" stroke-width="0.6"/>
<path d="M900.0,402.9L801.0,425.2" fill="none" stroke="#000" stroke-width="0.9"/>
<polygon points="790.9,427.6 800.2,421.9 801.8,428.5" fill="#000" stroke="#000" stroke-width="0.6"/>
<path d="M801.0,436.2L890.0,414.2" fill="none" stroke="#000" stroke-width="0.9"/>
<polygon points="899.6,411.8 890.8,417.5 889.2,410.9" fill="#000" stroke="#000" stroke-width="0.6"/>
<path d="M948.0,401.7L981.8,401.7" fill="none" stroke="#000" stroke-width="0.9"/>
<polygon points="991.5,401.7 981.8,405.1 981.8,398.3" fill="#000" stroke="#000" stroke-width="0.6"/>
<path d="M429.6,496.6C430.8,492.2 433.7,478.8 437.0,470.0C440.3,461.2 445.4,451.4 449.6,443.9C453.8,436.4 457.3,430.5 462.0,425.0C466.7,419.5 475.3,413.3 478.0,411.0" fill="none" stroke="#000" stroke-width="0.9"/>
<polygon points="487.2,406.5 479.5,414.1 476.5,407.9" fill="#000" stroke="#000" stroke-width="0.6"/>
<path d="M438.0,496.6C440.0,494.2 445.7,486.4 450.0,482.0C454.3,477.6 458.9,474.1 464.0,470.5C469.1,466.9 477.8,462.2 480.6,460.6" fill="none" stroke="#000" stroke-width="0.9"/>
<polygon points="489.7,455.7 482.2,463.6 479.0,457.6" fill="#000" stroke="#000" stroke-width="0.6"/>
<path d="M458.0,506.8L465.6,505.3" fill="none" stroke="#000" stroke-width="0.9"/>
<polygon points="475.4,503.2 466.3,508.6 464.9,502.0" fill="#000" stroke="#000" stroke-width="0.6"/>
<path d="M452.8,523.0L506.6,533.2" fill="none" stroke="#000" stroke-width="0.9"/>
<polygon points="516.4,535.2 505.9,536.5 507.3,529.9" fill="#000" stroke="#000" stroke-width="0.6"/>
<path d="M516.4,523.7L470.3,515.7" fill="none" stroke="#000" stroke-width="0.9"/>
<polygon points="460.6,514.0 470.9,512.4 469.7,519.0" fill="#000" stroke="#000" stroke-width="0.6"/>
<path d="M575.0,375.3C582.5,368.9 606.8,346.7 620.0,337.0C633.2,327.3 643.3,322.1 654.0,317.0C664.7,311.9 676.3,308.9 684.0,306.3C691.7,303.7 697.7,302.2 700.4,301.4" fill="none" stroke="#000" stroke-width="0.9"/>
<polygon points="708.8,298.7 701.4,304.6 699.4,298.2" fill="#000" stroke="#000" stroke-width="0.6"/>
<path d="M626.7,406.4L719.3,430.2" fill="none" stroke="#000" stroke-width="0.9"/>
<polygon points="728.9,432.6 718.5,433.5 720.1,426.9" fill="#000" stroke="#000" stroke-width="0.6"/>
<path d="M640.7,439.6L716.0,439.6" fill="none" stroke="#000" stroke-width="0.9"/>
<polygon points="726.0,439.6 716.0,443.0 716.0,436.2" fill="#000" stroke="#000" stroke-width="0.6"/>
<path d="M640.0,423.8C641.4,422.5 646.0,419.5 648.2,416.0C650.4,412.5 652.4,408.8 653.0,402.8C653.6,396.8 652.4,388.1 652.0,380.0C651.6,371.9 650.8,361.7 650.4,353.9C650.0,346.1 649.0,339.4 649.8,333.3C650.6,327.2 652.0,322.1 655.0,317.5C658.0,312.9 661.8,309.5 667.5,305.8C673.2,302.1 685.6,297.1 689.2,295.4" fill="none" stroke="#000" stroke-width="0.9"/>
<polygon points="698.3,291.6 690.5,298.5 687.9,292.3" fill="#000" stroke="#000" stroke-width="0.6"/>
<path d="M626.7,472.6C631.1,471.3 637.9,468.4 653.3,464.6C668.7,460.8 708.3,452.3 719.3,449.8" fill="none" stroke="#000" stroke-width="0.9"/>
<polygon points="728.9,447.4 720.1,453.1 718.5,446.5" fill="#000" stroke="#000" stroke-width="0.6"/>
<path d="M639.6,472.6C641.3,470.8 647.3,467.0 650.0,462.0C652.7,457.0 654.8,453.4 655.6,442.8C656.4,432.2 655.5,412.4 654.9,398.3C654.3,384.2 653.0,369.1 652.2,358.3C651.4,347.5 649.6,340.2 650.2,333.3C650.8,326.4 652.6,321.9 655.6,317.2C658.6,312.5 662.4,309.0 668.0,305.4C673.6,301.8 685.8,297.2 689.4,295.6" fill="none" stroke="#000" stroke-width="0.9"/>
<polygon points="698.3,291.8 690.7,298.7 688.1,292.5" fill="#000" stroke="#000" stroke-width="0.6"/>
<path d="M598.3,527.5L694.6,516.4" fill="none" stroke="#000" stroke-width="0.9"/>
<polygon points="704.2,515.2 695.0,519.8 694.2,513.0" fill="#000" stroke="#000" stroke-width="0.6"/>
<path d="M716.3,525.4L608.0,536.8" fill="none" stroke="#000" stroke-width="0.9"/>
<polygon points="598.6,537.8 607.6,533.4 608.4,540.2" fill="#000" stroke="#000" stroke-width="0.6"/>
<path d="M598.3,542.8L713.7,572.0" fill="none" stroke="#000" stroke-width="0.9"/>
<polygon points="723.4,574.6 712.8,575.3 714.6,568.7" fill="#000" stroke="#000" stroke-width="0.6"/>
<path d="M694.6,577.8L608.0,554.8" fill="none" stroke="#000" stroke-width="0.9"/>
<polygon points="598.6,552.3 608.9,551.5 607.1,558.1" fill="#000" stroke="#000" stroke-width="0.6"/>
<path d="M582.2,552.8C592.2,559.7 623.7,581.9 642.2,594.4C660.7,606.9 679.2,619.3 693.3,627.6C707.3,635.9 721.0,641.5 726.5,644.3" fill="none" stroke="#000" stroke-width="0.9"/>
<polygon points="736.7,648.8 725.1,647.4 727.9,641.2" fill="#000" stroke="#000" stroke-width="0.6"/>
<path d="M707.3,650.6C700.7,647.6 680.7,640.5 667.7,632.8C654.7,625.1 642.2,615.2 629.4,604.6C616.6,594.0 599.5,576.4 591.0,568.9C582.5,561.4 580.4,561.0 578.3,559.4" fill="none" stroke="#000" stroke-width="0.9"/>
<polygon points="570.7,553.0 580.5,556.8 576.1,562.0" fill="#000" stroke="#000" stroke-width="0.6"/>
<path d="M568.6,553.5C572.3,561.6 583.0,587.1 591.0,602.0C599.0,616.9 608.1,631.1 616.6,643.0C625.1,654.9 633.7,664.9 642.2,673.6C650.7,682.3 659.2,689.0 667.7,695.3C676.2,701.6 684.6,707.3 693.3,711.6C702.0,715.9 715.5,719.4 720.0,721.0" fill="none" stroke="#000" stroke-width="0.9"/>
<polygon points="730.3,724.2 719.0,724.2 721.0,717.8" fill="#000" stroke="#000" stroke-width="0.6"/>
<path d="M699.7,726.0C693.5,722.8 674.3,715.5 662.6,706.8C650.9,698.1 639.2,686.0 629.4,673.6C619.6,661.2 612.4,647.2 603.9,632.7C595.4,618.2 584.5,598.5 578.3,586.8C572.1,575.1 568.7,566.5 566.8,562.5" fill="none" stroke="#000" stroke-width="0.9"/>
<polygon points="563.6,553.0 570.0,561.4 563.6,563.6" fill="#000" stroke="#000" stroke-width="0.6"/>
<path d="M434.4,528.3C437.3,535.2 442.7,553.7 452.0,570.0C461.3,586.3 477.3,609.3 490.0,626.0C502.7,642.7 514.7,656.3 528.0,670.0C541.3,683.7 556.3,697.0 570.0,708.0C583.7,719.0 596.7,727.7 610.0,736.0C623.3,744.3 636.7,751.9 650.0,758.0C663.3,764.1 676.7,768.6 690.0,772.5C703.3,776.4 718.3,779.4 730.0,781.4C741.7,783.4 751.3,784.0 760.0,784.7C768.7,785.4 774.7,785.6 782.0,785.6C789.3,785.6 796.4,785.4 803.7,784.7C811.0,784.0 818.3,782.9 825.6,781.6C832.9,780.3 841.7,778.4 847.5,776.8C853.3,775.2 857.0,773.7 860.6,772.0C864.2,770.3 866.5,769.0 869.4,766.7C872.3,764.4 875.6,760.9 878.1,758.0C880.6,755.1 882.3,752.4 884.2,749.2C886.1,746.0 887.9,741.9 889.3,738.7C890.6,735.5 891.3,733.1 892.3,730.0C893.2,726.9 894.0,723.3 895.0,720.0C896.0,716.7 897.2,713.5 898.3,710.0C899.3,706.5 900.1,703.9 901.3,698.9C902.5,693.9 904.0,686.5 905.3,680.0C906.6,673.5 907.9,666.7 909.1,660.0C910.3,653.3 911.4,648.3 912.4,640.0C913.4,631.7 914.2,620.0 915.2,610.0C916.2,600.0 917.6,589.5 918.5,580.0C919.4,570.5 919.6,563.0 920.3,553.0C920.9,543.0 921.9,530.5 922.4,520.0C922.9,509.5 922.8,501.7 923.0,490.0C923.2,478.3 923.3,460.4 923.4,450.0C923.5,439.6 923.5,431.2 923.5,427.5" fill="none" stroke="#000" stroke-width="0.9"/>
<polygon points="923.5,417.5 926.9,427.5 920.1,427.5" fill="#000" stroke="#000" stroke-width="0.6"/>
<path d="M809.3,830.7C814.6,828.5 833.2,821.2 841.0,817.3C848.8,813.4 852.0,810.4 856.0,807.5C860.0,804.6 862.0,803.0 865.0,800.0C868.0,797.0 871.1,793.3 873.7,789.5C876.3,785.7 878.7,781.3 880.7,777.2C882.8,773.1 884.4,769.2 886.0,765.0C887.6,760.8 889.0,756.0 890.2,752.0C891.4,748.0 892.3,744.7 893.2,741.0C894.1,737.3 895.0,733.5 895.8,730.0C896.6,726.5 897.2,723.3 897.9,720.0C898.6,716.7 899.2,713.5 899.8,710.0C900.4,706.5 900.6,703.9 901.3,698.9C902.0,693.9 903.0,686.5 903.9,680.0C904.8,673.5 905.7,666.7 906.7,660.0C907.7,653.3 908.8,648.3 909.8,640.0C910.8,631.7 911.8,620.0 912.8,610.0C913.8,600.0 915.1,589.5 915.9,580.0C916.7,570.5 917.0,563.0 917.6,553.0C918.2,543.0 918.8,529.7 919.3,520.0C919.8,510.3 920.1,503.3 920.4,495.0C920.7,486.7 921.0,477.5 921.3,470.0C921.6,462.5 921.9,457.1 922.2,450.0C922.5,442.9 922.9,431.2 923.0,427.5" fill="none" stroke="#000" stroke-width="0.9"/>
<polygon points="923.3,417.5 926.4,427.6 919.6,427.4" fill="#000" stroke="#000" stroke-width="0.6"/>

<ellipse cx="763.0" cy="187.8" rx="39.7" ry="15.5" fill="#fff" stroke="#000" stroke-width="0.9"/>
<text x="762.4" y="192.3" fill="#000" text-anchor="middle" textLength="53.6" lengthAdjust="spacingAndGlyphs">/tfsensors</text>
<ellipse cx="763.3" cy="289.7" rx="65.0" ry="15.4" fill="#fff" stroke="#000" stroke-width="0.9"/>
<text x="762.7" y="294.2" fill="#000" text-anchor="middle" textLength="91.6" lengthAdjust="spacingAndGlyphs">/visual_odometry</text>
<ellipse cx="763.0" cy="364.7" rx="62.0" ry="15.4" fill="#fff" stroke="#000" stroke-width="0.9"/>
<text x="762.4" y="369.2" fill="#000" text-anchor="middle" textLength="89.0" lengthAdjust="spacingAndGlyphs">/optical_rotation</text>
<ellipse cx="763.3" cy="439.7" rx="37.3" ry="15.4" fill="#fff" stroke="#000" stroke-width="0.9"/>
<text x="762.7" y="444.2" fill="#000" text-anchor="middle" textLength="49.0" lengthAdjust="spacingAndGlyphs">/rtabmap</text>
<ellipse cx="763.3" cy="514.5" rx="59.0" ry="15.5" fill="#fff" stroke="#000" stroke-width="0.9"/>
<text x="762.7" y="519.0" fill="#000" text-anchor="middle" textLength="83.0" lengthAdjust="spacingAndGlyphs">/kinect2_bridge</text>
<ellipse cx="763.0" cy="589.7" rx="96.3" ry="15.4" fill="#fff" stroke="#000" stroke-width="0.9"/>
<text x="762.4" y="594.2" fill="#000" text-anchor="middle" textLength="141.7" lengthAdjust="spacingAndGlyphs">/kinect2_points_xyzrgb_hd</text>
<ellipse cx="763.2" cy="664.4" rx="100.0" ry="15.6" fill="#fff" stroke="#000" stroke-width="0.9"/>
<text x="762.6" y="668.9" fill="#000" text-anchor="middle" textLength="148.4" lengthAdjust="spacingAndGlyphs">/kinect2_points_xyzrgb_qhd</text>
<ellipse cx="763.4" cy="739.6" rx="95.4" ry="15.6" fill="#fff" stroke="#000" stroke-width="0.9"/>
<text x="762.8" y="744.1" fill="#000" text-anchor="middle" textLength="140.4" lengthAdjust="spacingAndGlyphs">/kinect2_points_xyzrgb_sd</text>
<ellipse cx="763.2" cy="841.4" rx="58.0" ry="15.4" fill="#fff" stroke="#000" stroke-width="0.9"/>
<text x="762.6" y="845.9" fill="#000" text-anchor="middle" textLength="80.0" lengthAdjust="spacingAndGlyphs">/rgb_to_imu_tf</text>
<ellipse cx="425.3" cy="512.8" rx="34.7" ry="15.5" fill="#fff" stroke="#000" stroke-width="0.9"/>
<text x="424.7" y="517.3" fill="#000" text-anchor="middle" textLength="43.4" lengthAdjust="spacingAndGlyphs">/kinect2</text>
<ellipse cx="1124.5" cy="289.7" rx="62.2" ry="15.4" fill="#fff" stroke="#ff0000" stroke-width="0.9"/>
<text x="1123.9" y="294.2" fill="#f00000" text-anchor="middle" textLength="85.7" lengthAdjust="spacingAndGlyphs">/ekf_localization</text>
<ellipse cx="1124.2" cy="401.7" rx="132.5" ry="15.6" fill="#fff" stroke="#000" stroke-width="0.9"/>
<text x="1123.6" y="406.2" fill="#000" text-anchor="middle" textLength="200.0" lengthAdjust="spacingAndGlyphs">/view_frames_11719_1474327421278</text>
<rect x="878.3" y="172.0" width="91.0" height="31.3" fill="#fff" stroke="#1a1aff" stroke-width="0.9"/>
<text x="923.8" y="192.2" fill="#0000cc" text-anchor="middle" textLength="83.3" lengthAdjust="spacingAndGlyphs">/tfsensors/imu1</text>
<rect x="528.7" y="274.0" width="57.0" height="31.3" fill="#fff" stroke="#1a1aff" stroke-width="0.9"/>
<text x="557.2" y="294.1" fill="#0000cc" text-anchor="middle" textLength="48.3" lengthAdjust="spacingAndGlyphs">/tf_static</text>
<rect x="899.7" y="274.0" width="48.3" height="31.3" fill="#fff" stroke="#1a1aff" stroke-width="0.9"/>
<text x="923.9" y="294.1" fill="#0000cc" text-anchor="middle" textLength="17.3" lengthAdjust="spacingAndGlyphs">/vo</text>
<rect x="899.7" y="386.0" width="48.3" height="31.3" fill="#fff" stroke="#22b4b4" stroke-width="0.9"/>
<text x="923.9" y="406.1" fill="#00a6a6" text-anchor="middle" textLength="15.0" lengthAdjust="spacingAndGlyphs">/tf</text>
<rect x="487.3" y="375.3" width="140.0" height="31.4" fill="#fff" stroke="#000" stroke-width="0.9"/>
<text x="557.3" y="395.5" fill="#000" text-anchor="middle" textLength="137.3" lengthAdjust="spacingAndGlyphs">/kinect2/qhd/camera_info</text>
<rect x="474.3" y="424.0" width="166.4" height="31.7" fill="#fff" stroke="#000" stroke-width="0.9"/>
<text x="557.5" y="444.4" fill="#000" text-anchor="middle" textLength="168.0" lengthAdjust="spacingAndGlyphs">/kinect2/qhd/image_depth_rect</text>
<rect x="475.3" y="472.7" width="164.0" height="31.3" fill="#fff" stroke="#000" stroke-width="0.9"/>
<text x="557.3" y="492.9" fill="#000" text-anchor="middle" textLength="163.0" lengthAdjust="spacingAndGlyphs">/kinect2/qhd/image_color_rect</text>
<rect x="516.7" y="521.3" width="81.6" height="31.4" fill="#fff" stroke="#000" stroke-width="0.9"/>
<text x="557.5" y="541.5" fill="#000" text-anchor="middle" textLength="74.3" lengthAdjust="spacingAndGlyphs">/kinect2/bond</text>
</svg>
</body>
</html>
